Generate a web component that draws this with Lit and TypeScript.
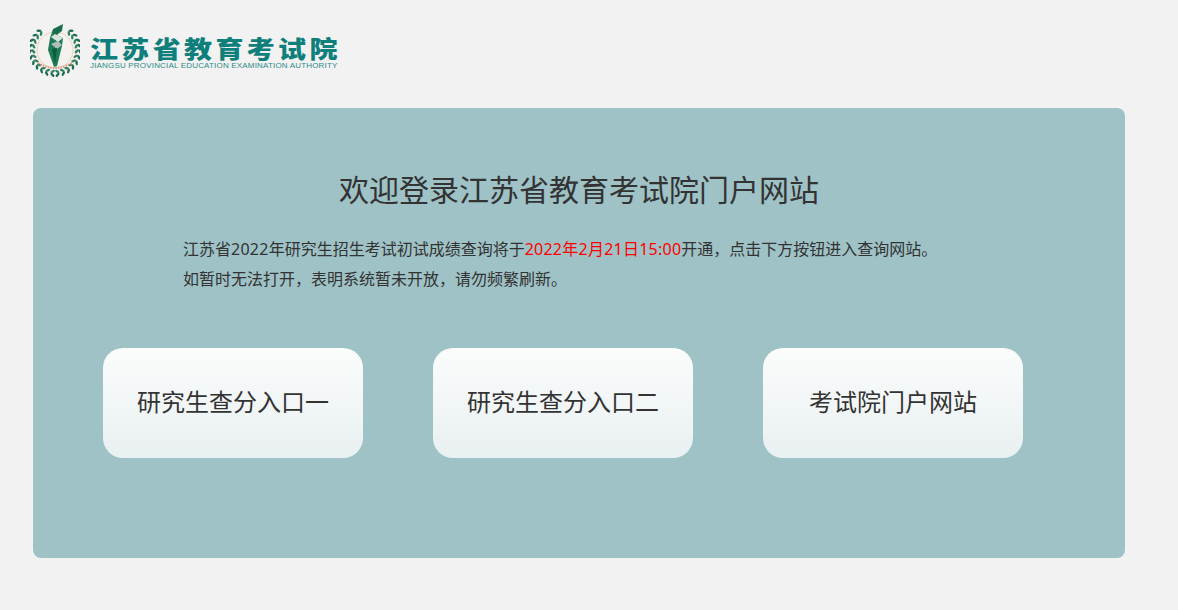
import { LitElement, html, css, svg } from "lit";
import { customElement } from "lit/decorators.js";

const CX = 25;
const CY = 28;

const leaves = () => {
  const out = [];
  for (const side of [-1, 1]) {
    for (let i = 0; i < 11; i++) {
      const deg = 6 + i * 13.4;
      const a = (deg * Math.PI) / 180;
      const place = (r: number, tilt: number, rx: number, ry: number, fill: string) => {
        const x = (CX + side * r * Math.sin(a)).toFixed(1);
        const y = (CY + r * Math.cos(a)).toFixed(1);
        const rot = side * -deg + side * tilt;
        return svg`<ellipse cx=${x} cy=${y} rx=${rx} ry=${ry} fill=${fill} transform="rotate(${rot} ${x} ${y})"></ellipse>`;
      };
      out.push(place(25, -40, 2.5, 1.25, "#1d6b4c"));
      out.push(place(21.6, 40, 2.5, 1.25, "#2f8060"));
    }
  }
  return out;
};

@customElement("app-root")
export class AppRoot extends LitElement {
  static styles = css`
    :host {
      display: block;
      min-height: 610px;
      background: #f2f2f2;
      font-family: "Noto Sans", "Noto Sans CJK SC", sans-serif;
      color: #333;
    }
    .header {
      display: flex;
      align-items: flex-start;
      height: 108px;
      padding: 22px 0 0 30px;
      box-sizing: border-box;
      gap: 10px;
    }
    .emblem {
      width: 50px;
      height: 56px;
      flex: none;
    }
    .brand {
      display: flex;
      flex-direction: column;
      padding-top: 13px;
    }
    .brand-cn {
      font-family: "Noto Sans CJK SC", sans-serif;
      font-size: 28px;
      line-height: 27px;
      font-weight: 900;
      letter-spacing: 3.35px;
      color: #0f7f7c;
      white-space: nowrap;
      transform: scaleY(0.84);
      transform-origin: center;
    }
    .brand-en {
      font-family: "Liberation Sans", sans-serif;
      font-size: 8px;
      line-height: 8px;
      color: #2a8a87;
      white-space: nowrap;
      letter-spacing: 0.18px;
    }
    .card {
      width: 1092px;
      height: 450px;
      margin-left: 33px;
      box-sizing: border-box;
      background: #9ec2c6;
      border-radius: 8px;
      padding: 60px 70px 0;
    }
    h1 {
      margin: 0;
      font-size: 30px;
      line-height: 44px;
      font-weight: 400;
      text-align: center;
      color: #333;
    }
    .notice {
      margin: 22px 0 0 80px;
      font-size: 16px;
      line-height: 30px;
      color: #333;
    }
    .notice p { margin: 0; }
    .red { color: #f00; }
    .num { letter-spacing: 0.25px; }
    .entries {
      display: flex;
      gap: 70px;
      margin-top: 54px;
    }
    .entry {
      width: 260px;
      height: 110px;
      box-sizing: border-box;
      padding-bottom: 4px;
      border-radius: 20px;
      display: flex;
      align-items: center;
      justify-content: center;
      font-family: "Noto Sans CJK SC", sans-serif;
      font-size: 24px;
      line-height: 30px;
      color: #333;
      text-decoration: none;
      background: linear-gradient(to bottom, #fbfcfc, #e9f0f1);
    }
  `;

  render() {
    return html`
      <div class="header">
        <svg class="emblem" viewBox="0 0 50 56" aria-hidden="true">
          <circle cx="25" cy="28" r="18" fill="#f4f2ee" stroke="#ecd2bf" stroke-width="1"></circle>
          ${leaves()}
          <path d="M8 41 Q25 51 42 41" fill="none" stroke="#dc9a7c" stroke-width="2" stroke-dasharray="1.6 1"></path>
          <path d="M20 16 L23 7 L33 2 L32 9 L27 13 L33 16 L32 24 L27 44 L24 45 L18 28 Z" fill="#1f7a56"></path>
          <path d="M23 8 L32 3 L31 8 L25 13 Z" fill="#1a6a4c"></path>
          <path d="M21 15 L25 12 L33 16 L28 20 Z" fill="#d9e3de"></path>
          <path d="M21 22 L28 19 L32 23 L27 27 Z" fill="#aebfb8"></path>
          <path d="M22 27 L27 26 L25 42 Z" fill="#0d5c3e"></path>
        </svg>
        <div class="brand">
          <div class="brand-cn">江苏省教育考试院</div>
          <div class="brand-en">JIANGSU PROVINCIAL EDUCATION EXAMINATION AUTHORITY</div>
        </div>
      </div>
      <main class="card">
        <h1>欢迎登录江苏省教育考试院门户网站</h1>
        <div class="notice">
          <p>江苏省<span class="num">2022</span>年研究生招生考试初试成绩查询将于<span class="red num">2022年2月21日15:00</span>开通，点击下方按钮进入查询网站。</p>
          <p>如暂时无法打开，表明系统暂未开放，请勿频繁刷新。</p>
        </div>
        <div class="entries">
          <a class="entry" href="#">研究生查分入口一</a>
          <a class="entry" href="#">研究生查分入口二</a>
          <a class="entry" href="#">考试院门户网站</a>
        </div>
      </main>
    `;
  }
}
